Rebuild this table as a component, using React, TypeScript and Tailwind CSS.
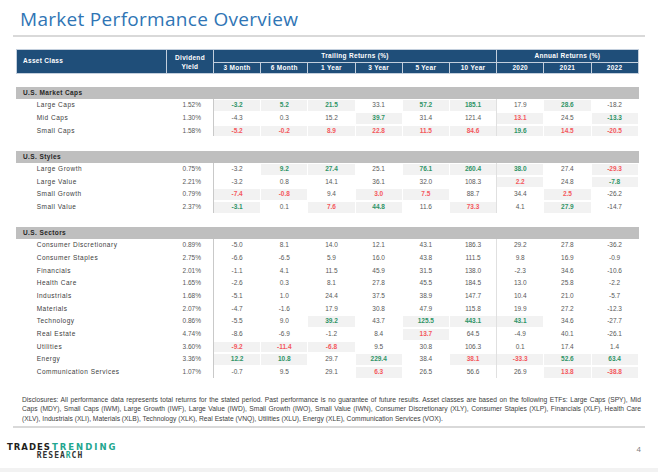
const COLS = "grid-cols-[149px_46px_repeat(9,46.2px)]";

const periods = ["3 Month", "6 Month", "1 Year", "3 Year", "5 Year", "10 Year", "2020", "2021", "2022"];

const sections = [
  {
    name: "U.S. Market Caps",
    rows: [
      ["Large Caps", "1.52%", "g-3.2 g5.2 g21.5 33.1 g57.2 g185.1 17.9 g28.6 -18.2"],
      ["Mid Caps", "1.30%", "-4.3 0.3 15.2 g39.7 31.4 121.4 r13.1 24.5 g-13.3"],
      ["Small Caps", "1.58%", "r-5.2 r-0.2 r8.9 r22.8 r11.5 r84.6 g19.6 r14.5 r-20.5"],
    ],
  },
  {
    name: "U.S. Styles",
    rows: [
      ["Large Growth", "0.75%", "-3.2 g9.2 g27.4 25.1 g76.1 g260.4 g38.0 27.4 r-29.3"],
      ["Large Value", "2.21%", "-3.2 0.8 14.1 36.1 32.0 108.3 r2.2 24.8 g-7.8"],
      ["Small Growth", "0.79%", "r-7.4 r-0.8 9.4 r3.0 r7.5 88.7 34.4 r2.5 -26.2"],
      ["Small Value", "2.37%", "g-3.1 0.1 r7.6 g44.8 11.6 r73.3 4.1 g27.9 -14.7"],
    ],
  },
  {
    name: "U.S. Sectors",
    rows: [
      ["Consumer Discretionary", "0.89%", "-5.0 8.1 14.0 12.1 43.1 186.3 29.2 27.8 -36.2"],
      ["Consumer Staples", "2.75%", "-6.6 -6.5 5.9 16.0 43.8 111.5 9.8 16.9 -0.9"],
      ["Financials", "2.01%", "-1.1 4.1 11.5 45.9 31.5 138.0 -2.3 34.6 -10.6"],
      ["Health Care", "1.65%", "-2.6 0.3 8.1 27.8 45.5 184.5 13.0 25.8 -2.2"],
      ["Industrials", "1.68%", "-5.1 1.0 24.4 37.5 38.9 147.7 10.4 21.0 -5.7"],
      ["Materials", "2.07%", "-4.7 -1.6 17.9 30.8 47.9 115.8 19.9 27.2 -12.3"],
      ["Technology", "0.86%", "-5.5 9.0 g39.2 43.7 g125.5 g443.1 g43.1 34.6 -27.7"],
      ["Real Estate", "4.74%", "-8.6 -6.9 -1.2 8.4 r13.7 64.5 -4.9 40.1 -26.1"],
      ["Utilities", "3.60%", "r-9.2 r-11.4 r-6.8 9.5 30.8 106.3 0.1 17.4 1.4"],
      ["Energy", "3.36%", "g12.2 g10.8 29.7 g229.4 38.4 r38.1 r-33.3 g52.6 g63.4"],
      ["Communication Services", "1.07%", "-0.7 9.5 29.1 r6.3 26.5 56.6 26.9 r13.8 r-38.8"],
    ],
  },
];

const ValueCell = ({ raw }: { raw: string }) => {
  const tone = raw[0];
  if (tone === "g" || tone === "r") {
    return (
      <div
        className={`h-[10.7px] flex items-center justify-center bg-[#f2f2f2] font-bold ${
          tone === "g" ? "text-[#2f9467]" : "text-[#f4585d]"
        }`}
      >
        {raw.slice(1)}
      </div>
    );
  }
  return <div className="h-[10.7px] flex items-center justify-center text-[#595959]">{raw}</div>;
};

export default function App() {
  return (
    <div className="w-[658px] h-[472px] bg-white flex flex-col overflow-hidden font-['Liberation_Sans',Arial,sans-serif]">
      <div className="h-[35px] pt-[6px] pl-[20px]">
        <h1 className="font-['Open_Sans',sans-serif] text-[19px] leading-[26px] tracking-[0.3px] text-[#2f75b5]">
          Market Performance Overview
        </h1>
      </div>
      <div className="mx-[13px] w-[632px] h-[2px] bg-[#d9d9d9]" />

      <div className="h-[12px]" />

      {/* header */}
      <div
        className={`ml-[16px] w-[622.8px] p-px bg-[#c3cfdd] grid ${COLS} grid-rows-[11.7px_10.6px] gap-px text-white font-bold text-[6.5px] tracking-[0.3px] leading-none`}
      >
        <div className="row-span-2 bg-[#1f4e79] flex items-center pl-[6px]">Asset Class</div>
        <div className="row-span-2 bg-[#1f4e79] flex flex-col items-center justify-center text-center leading-[9px]">
          <span>Dividend</span>
          <span>Yield</span>
        </div>
        <div className="col-span-6 bg-[#1f4e79] flex items-center justify-center">Trailing Returns (%)</div>
        <div className="col-span-3 bg-[#1f4e79] flex items-center justify-center">Annual Returns (%)</div>
        {periods.map((p) => (
          <div key={p} className="bg-[#1f4e79] flex items-center justify-center">
            {p}
          </div>
        ))}
      </div>

      <div className="h-[13px]" />

      {sections.map((s, i) => (
        <div key={s.name}>
          {i > 0 && <div className="h-[14.5px]" />}
          <div className="ml-[16px] w-[622.8px] h-[12px] bg-[#bfbfbf] pl-[7px] flex items-center text-[6.5px] font-bold tracking-[0.4px] text-[#262626]">
            {s.name}
          </div>
          <div
            className={`ml-[16px] w-[622.8px] px-px pt-px grid ${COLS} gap-x-px gap-y-[2px] text-[6.5px] leading-none bg-[linear-gradient(to_right,transparent_197px,#c9c9c9_197px,#c9c9c9_198px,transparent_198px,transparent_480px,#e0e0e0_480px,#e0e0e0_481px,transparent_481px)]`}
          >
            {s.rows.map(([label, yld, vals]) => (
              <div key={label} className="contents">
                <div className="h-[10.7px] flex items-center pl-[19.7px] tracking-[0.5px] text-[#404040]">
                  {label}
                </div>
                <div className="h-[10.7px] flex items-center justify-end pr-[12px] text-[#595959]">{yld}</div>
                {vals.split(" ").map((v, k) => (
                  <ValueCell key={k} raw={v} />
                ))}
              </div>
            ))}
          </div>
        </div>
      ))}

      <div className="h-[17.4px]" />

      <div className="ml-[22px] w-[619px] text-[6.7px] leading-[9.33px] text-[#404040]">
        <p className="text-justify [text-align-last:justify]">
          Disclosures: All performance data represents total returns for the stated period. Past performance is no
          guarantee of future results. Asset classes are based on the following ETFs: Large Caps (SPY), Mid
        </p>
        <p className="text-justify [text-align-last:justify]">
          Caps (MDY), Small Caps (IWM), Large Growth (IWF), Large Value (IWD), Small Growth (IWO), Small Value (IWN),
          Consumer Discretionary (XLY), Consumer Staples (XLP), Financials (XLF), Health Care
        </p>
        <p>
          (XLV), Industrials (XLI), Materials (XLB), Technology (XLK), Real Estate (VNQ), Utilities (XLU), Energy
          (XLE), Communication Services (VOX).
        </p>
      </div>

      <div className="h-[3.4px]" />
      <div className="mx-[13px] w-[632px] h-[2px] bg-[#d9d9d9]" />

      <div className="h-[40px] flex justify-between">
        <div className="pl-[7px] pt-[14.8px]">
          <div className="flex font-['DejaVu_Sans',sans-serif] text-[8.5px] leading-[9px]">
            <span className="font-bold tracking-[1px] text-[#231f20]">TRADES</span>
            <span className="ml-[1px] font-bold tracking-[2px] text-[#22a68f]">TRENDING</span>
          </div>
          <div className="-mt-[1px] pl-[29.7px] font-['DejaVu_Sans_Mono',monospace] font-bold text-[8px] leading-[9px] tracking-[1px] text-[#333333]">
            RESEA<span className="text-[#22a68f]">R</span>CH
          </div>
        </div>
        <div className="pr-[17px] pt-[17px] text-[8px] leading-[10px] text-[#7f7f7f]">4</div>
      </div>
      <div className="flex-1 bg-[#f2f2f2]" />
    </div>
  );
}
